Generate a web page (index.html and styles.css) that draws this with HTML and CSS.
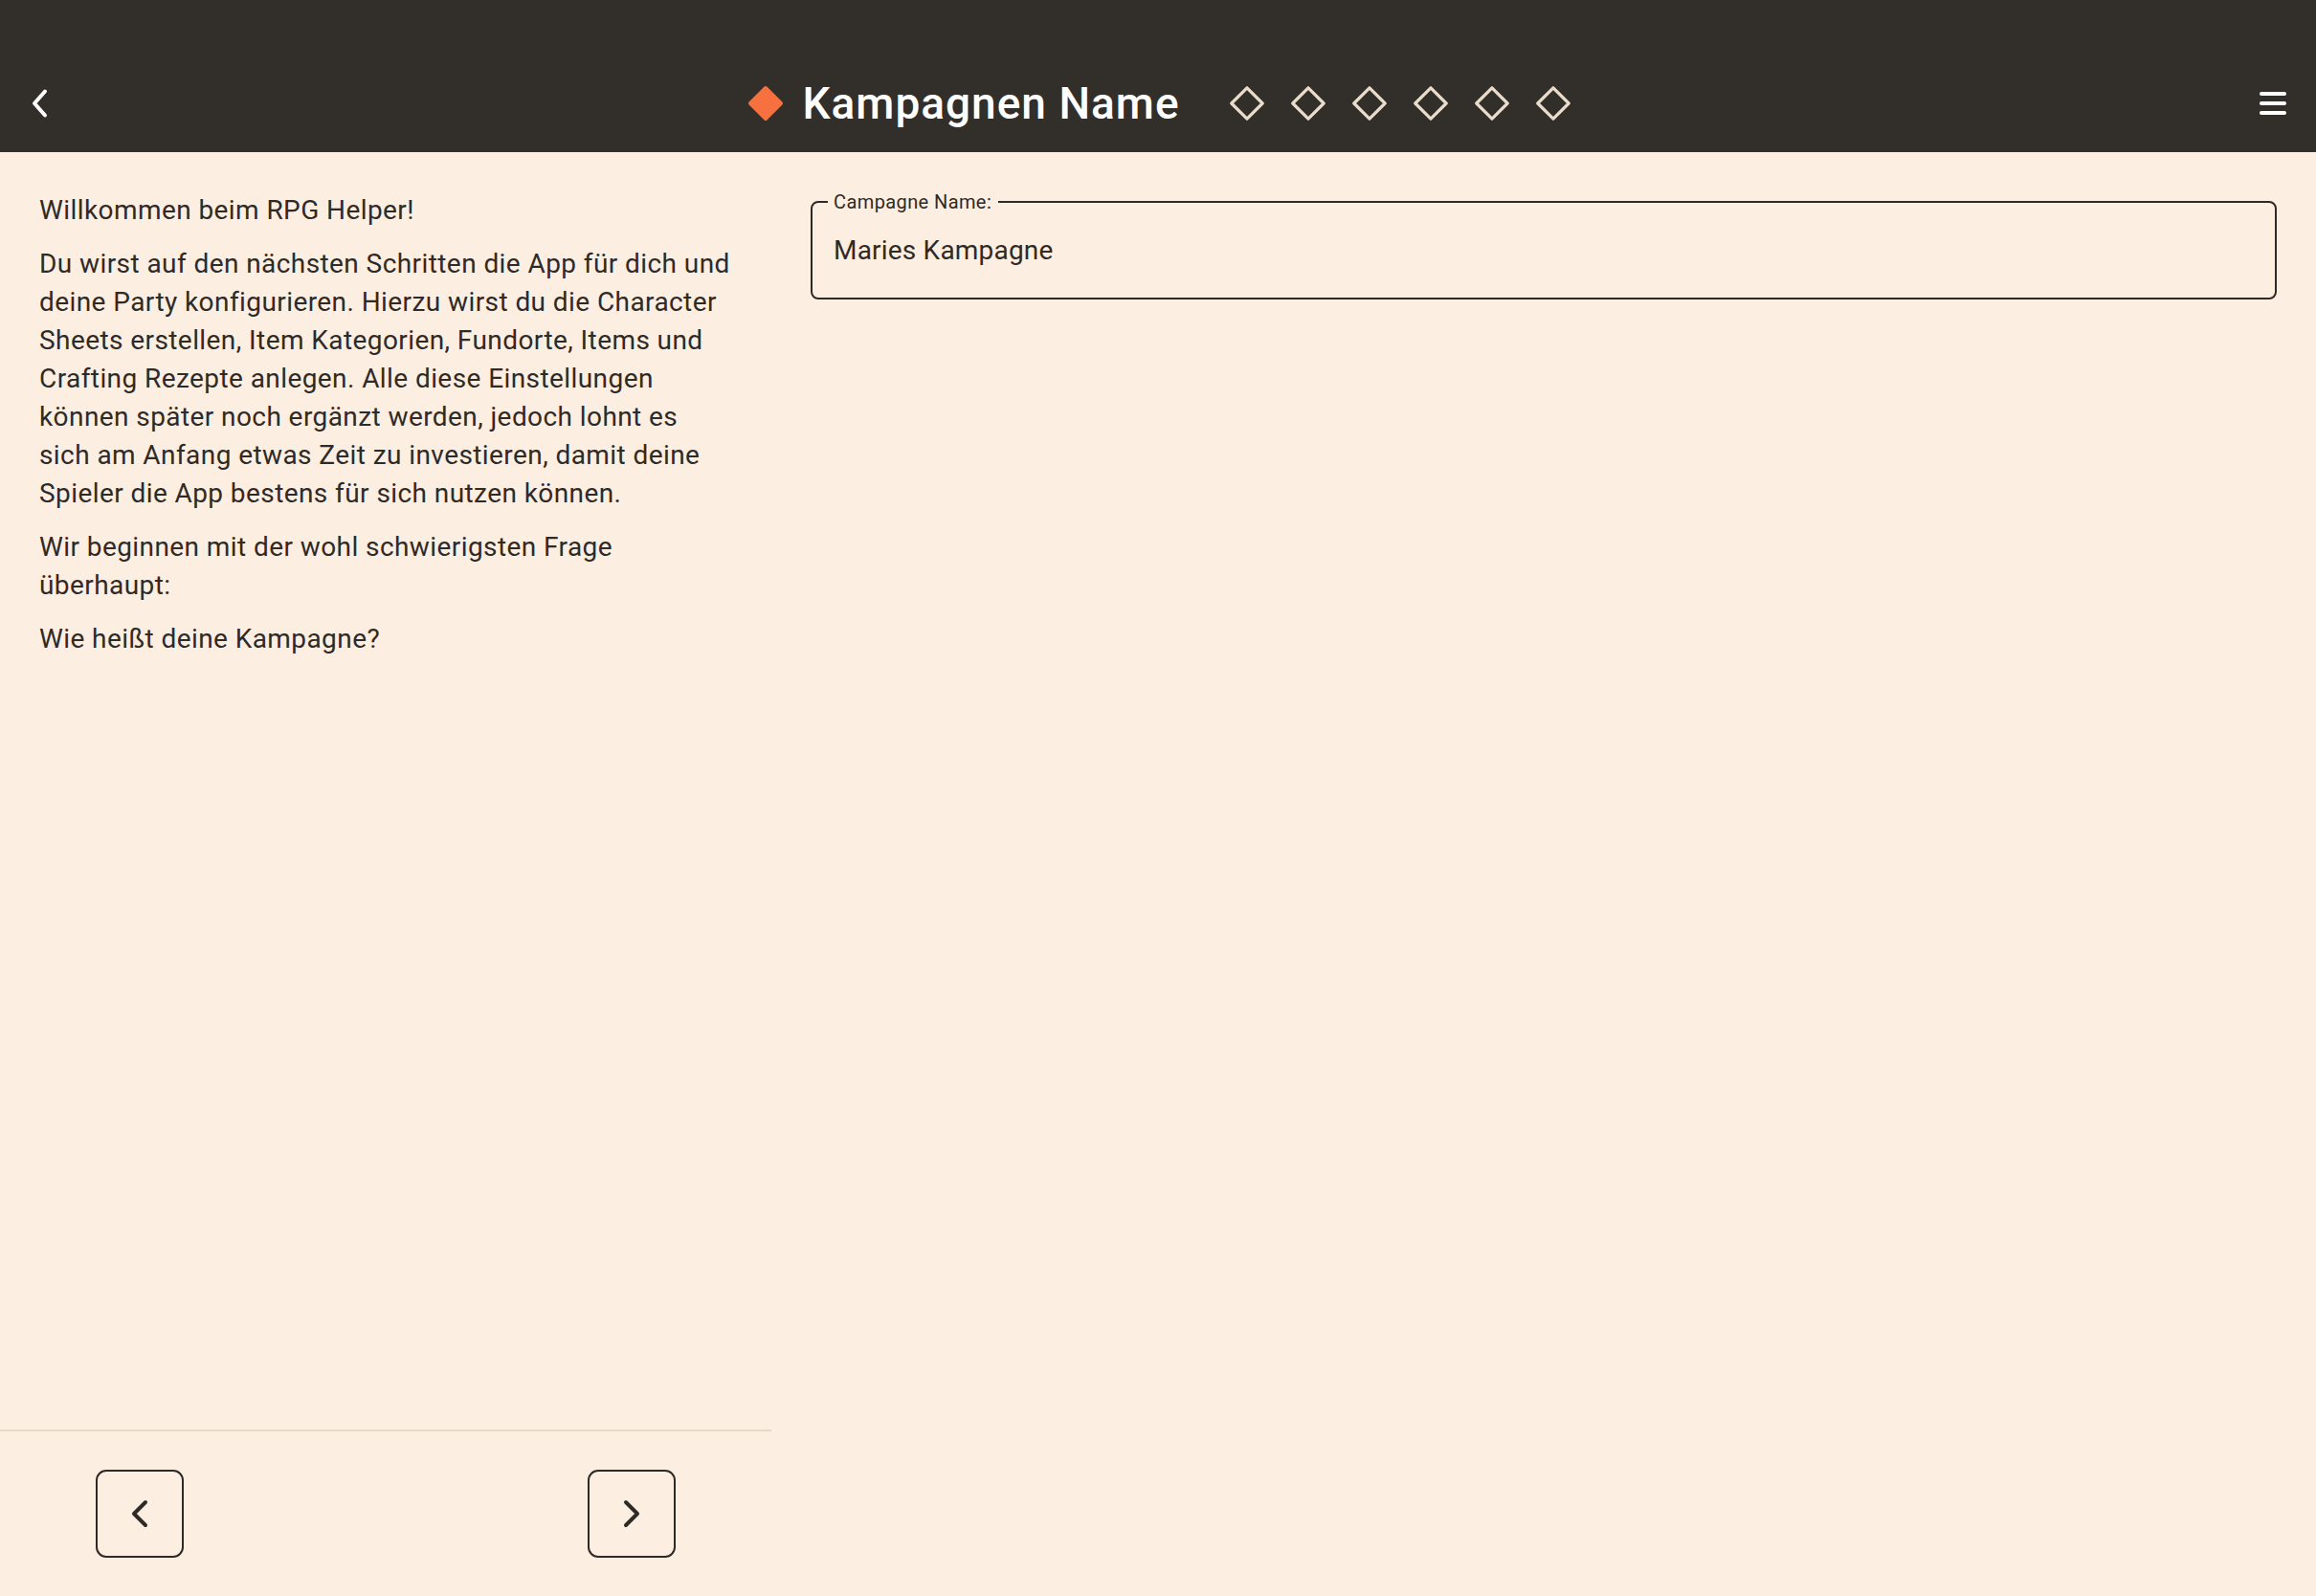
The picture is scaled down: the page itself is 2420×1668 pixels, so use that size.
FILE: index.html
```html
<!DOCTYPE html>
<html lang="de">
<head>
<meta charset="utf-8">
<title>RPG Helper – Kampagnen Name</title>
<link rel="stylesheet" href="styles.css">
</head>
<body>
<div class="app">
  <header class="topbar">
    <div class="topbar-left">
      <button class="icon-btn back-btn" aria-label="Zurück">
        <svg width="18" height="32" viewBox="0 0 18 32"><path d="M15 3.5 L4 16 L15 28.5" fill="none" stroke="#ffffff" stroke-width="4" stroke-linecap="round" stroke-linejoin="round"/></svg>
      </button>
    </div>
    <div class="title-group">
      <svg class="step-active" width="38" height="38" viewBox="0 0 38 38"><polygon points="19,3 35,19 19,35 3,19" fill="#f7703f" stroke="#f7703f" stroke-width="4" stroke-linejoin="round"/></svg>
      <h1 class="title">Kampagnen Name</h1>
      <div class="steps">
        <svg class="step" width="36" height="36" viewBox="0 0 36 36"><polygon points="18,1.8 34.2,18 18,34.2 1.8,18" fill="none" stroke="#e9dccb" stroke-width="3.2" stroke-linejoin="round"/></svg>
        <svg class="step" width="36" height="36" viewBox="0 0 36 36"><polygon points="18,1.8 34.2,18 18,34.2 1.8,18" fill="none" stroke="#e9dccb" stroke-width="3.2" stroke-linejoin="round"/></svg>
        <svg class="step" width="36" height="36" viewBox="0 0 36 36"><polygon points="18,1.8 34.2,18 18,34.2 1.8,18" fill="none" stroke="#e9dccb" stroke-width="3.2" stroke-linejoin="round"/></svg>
        <svg class="step" width="36" height="36" viewBox="0 0 36 36"><polygon points="18,1.8 34.2,18 18,34.2 1.8,18" fill="none" stroke="#e9dccb" stroke-width="3.2" stroke-linejoin="round"/></svg>
        <svg class="step" width="36" height="36" viewBox="0 0 36 36"><polygon points="18,1.8 34.2,18 18,34.2 1.8,18" fill="none" stroke="#e9dccb" stroke-width="3.2" stroke-linejoin="round"/></svg>
        <svg class="step" width="36" height="36" viewBox="0 0 36 36"><polygon points="18,1.8 34.2,18 18,34.2 1.8,18" fill="none" stroke="#e9dccb" stroke-width="3.2" stroke-linejoin="round"/></svg>
      </div>
    </div>
    <div class="topbar-right">
      <button class="icon-btn menu-btn" aria-label="Menü">
        <svg width="30" height="26" viewBox="0 0 30 26"><path d="M3 3 H27 M3 13 H27 M3 23 H27" fill="none" stroke="#ffffff" stroke-width="4" stroke-linecap="round"/></svg>
      </button>
    </div>
  </header>

  <main class="content">
    <section class="intro-panel">
      <div class="intro-text">
        <p>Willkommen beim RPG Helper!</p>
        <p>Du wirst auf den nächsten Schritten die App für dich und deine Party konfigurieren. Hierzu wirst du die Character Sheets erstellen, Item Kategorien, Fundorte, Items und Crafting Rezepte anlegen. Alle diese Einstellungen können später noch ergänzt werden, jedoch lohnt es sich am Anfang etwas Zeit zu investieren, damit deine Spieler die App bestens für sich nutzen können.</p>
        <p>Wir beginnen mit der wohl schwierigsten Frage überhaupt:</p>
        <p>Wie heißt deine Kampagne?</p>
      </div>
      <nav class="pager">
        <button class="pager-btn" aria-label="Zurück">
          <svg width="20" height="32" viewBox="0 0 20 32"><path d="M16 4 L4 16 L16 28" fill="none" stroke="#2f2a26" stroke-width="4" stroke-linecap="round" stroke-linejoin="round"/></svg>
        </button>
        <button class="pager-btn" aria-label="Weiter">
          <svg width="20" height="32" viewBox="0 0 20 32"><path d="M4 4 L16 16 L4 28" fill="none" stroke="#2f2a26" stroke-width="4" stroke-linecap="round" stroke-linejoin="round"/></svg>
        </button>
      </nav>
    </section>

    <section class="form-panel">
      <fieldset class="field">
        <legend class="field-label">Campagne Name:</legend>
        <input class="field-input" type="text" value="Maries Kampagne">
      </fieldset>
    </section>
  </main>
</div>
</body>
</html>
```

FILE: styles.css
```css
* {
  box-sizing: border-box;
}

html, body {
  margin: 0;
  padding: 0;
}

body {
  background: #fdeee2;
  color: #2f2a26;
  font-family: Roboto, "Noto Sans", "Liberation Sans", sans-serif;
}

.app {
  display: flex;
  flex-direction: column;
  height: 1668px;
}

.topbar {
  height: 159px;
  padding: 57px 30px 0 32px;
  background: #322e29;
  display: grid;
  grid-template-columns: 1fr auto 1fr;
  align-items: center;
}

.topbar-left {
  display: flex;
  justify-content: flex-start;
}

.topbar-right {
  display: flex;
  justify-content: flex-end;
}

.icon-btn {
  background: none;
  border: 0;
  padding: 0;
  margin: 0;
  display: flex;
  align-items: center;
  justify-content: center;
  cursor: pointer;
}

.title-group {
  display: flex;
  align-items: center;
}

.step-active {
  display: block;
  margin-right: 19px;
}

.title {
  margin: 0;
  color: #ffffff;
  font-size: 46px;
  font-weight: 500;
  line-height: 1;
  letter-spacing: 1px;
}

.steps {
  display: flex;
  align-items: center;
  gap: 28px;
  margin-left: 52px;
}

.step {
  display: block;
}

.content {
  flex: 1;
  display: grid;
  grid-template-columns: 806px 1fr;
  min-height: 0;
}

.intro-panel {
  display: flex;
  flex-direction: column;
}

.intro-text {
  flex: 1;
  padding: 41px 41px 0 41px;
  font-size: 28px;
  line-height: 40px;
  letter-spacing: 0.42px;
}

.intro-text p {
  margin: 0 0 16px 0;
}

.pager {
  height: 174px;
  border-top: 2px solid #e7d9c5;
  display: flex;
  align-items: center;
  justify-content: space-between;
  padding: 0 100px;
}

.pager-btn {
  width: 92px;
  height: 92px;
  border: 2px solid #2f2a26;
  border-radius: 11px;
  background: transparent;
  display: flex;
  align-items: center;
  justify-content: center;
  padding: 0;
  cursor: pointer;
}

.form-panel {
  padding: 40px 41px 0 41px;
}

.field {
  margin: 0;
  border: 2px solid #2f2a26;
  border-radius: 8px;
  padding: 0 20px 29px 16px;
}

.field-label {
  padding: 0 7px 0 6px;
  font-size: 20px;
  line-height: 24px;
  letter-spacing: 0.4px;
  color: #2f2a26;
}

.field-input {
  display: block;
  width: 100%;
  margin-top: 19px;
  margin-left: 6px;
  border: 0;
  padding: 0;
  background: transparent;
  font-family: Roboto, "Noto Sans", "Liberation Sans", sans-serif;
  font-size: 28px;
  line-height: 40px;
  height: 40px;
  letter-spacing: 0.2px;
  color: #2f2a26;
  outline: none;
}
```
